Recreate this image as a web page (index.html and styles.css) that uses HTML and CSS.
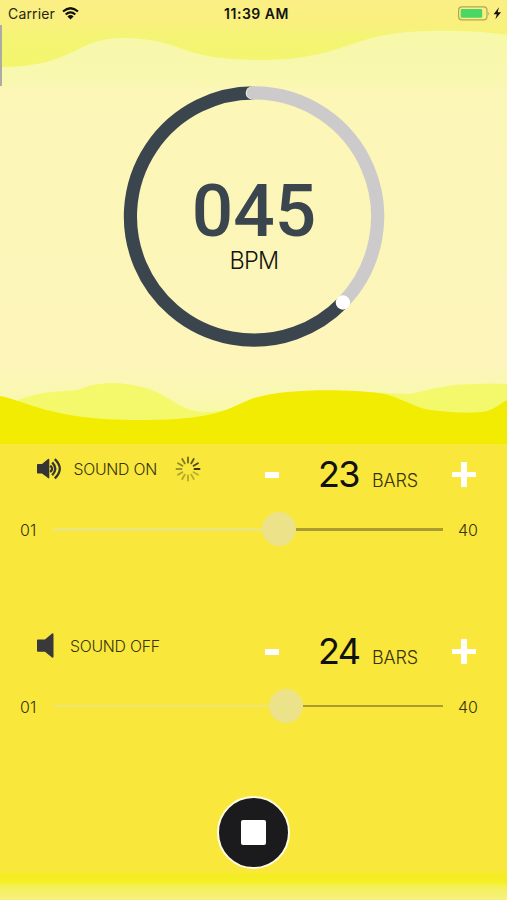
FILE: index.html
```html
<!DOCTYPE html>
<html lang="en">
<head>
<meta charset="utf-8">
<title>Metronome</title>
<link rel="stylesheet" href="styles.css">
</head>
<body>
<main class="app">
  <section class="hero">
    <svg class="waves" viewBox="0 0 507 444" aria-hidden="true">
      <defs>
        <linearGradient id="sky" x1="0" y1="0" x2="0" y2="1">
          <stop offset="0" stop-color="#f7f8a4"/>
          <stop offset=".13" stop-color="#f8f8ad"/>
          <stop offset=".19" stop-color="#f9f7b0"/>
          <stop offset=".2" stop-color="#fcf6b7"/>
          <stop offset=".82" stop-color="#fdf5ba"/>
          <stop offset=".9" stop-color="#f9f8af"/>
          <stop offset="1" stop-color="#f8fa9d"/>
        </linearGradient>
        <linearGradient id="crest" x1="0" y1="0" x2="0" y2="1">
          <stop offset="0" stop-color="#fbef84"/>
          <stop offset=".35" stop-color="#f9f07e"/>
          <stop offset=".5" stop-color="#f5f476"/>
          <stop offset="1" stop-color="#f2f66c"/>
        </linearGradient>
      </defs>
      <rect width="507" height="444" fill="url(#sky)"/>
      <path fill="url(#crest)" d="M0 0H507V35C475 30 420 29 385 35C345 43 326 60 260 60C175 60 184 38 122 38C75 38 75 67 0 67Z"/>
      <path fill="#f4f96b" d="M18 400C45 390 59 392 78 390C90 385 98 383 115 383C165 386 169 405 195 411C230 417 270 392 330 391C365 391 390 394 410 394C445 387 445 383 507 384V444H18Z"/>
      <path fill="#f2ec02" d="M0 396C27 401 50 420 139 420C218 420 226 409 254 398C285 388 350 389 379 393C399 396 412 407 430 410C456 413 479 414 490 410C498 407 502 402 507 400V444H0Z"/>
    </svg>
    <i class="scroll-mark"></i>
    <header class="status">
      <div class="carrier">Carrier
        <svg width="17" height="13" viewBox="0 0 17 13" fill="none" stroke="#111" stroke-width="2.2">
          <path d="M1 4.5Q8.5-2 16 4.5M3.7 7.5Q8.5 3.2 13.3 7.5"/>
          <path d="M5.4 9.4Q8.5 6.8 11.6 9.4L8.5 12.5Z" fill="#111" stroke="none"/>
        </svg>
      </div>
      <time>11:39 AM</time>
      <svg class="battery" width="44" height="15" viewBox="0 0 44 15">
        <rect x=".6" y=".9" width="28.4" height="13" rx="3.4" fill="none" stroke="#b2a558" stroke-width="1.2"/>
        <rect x="2.7" y="3" width="21.5" height="8.8" rx="1.2" fill="#4bd763"/>
        <path d="M30.3 5.4Q32 7.4 30.3 9.4Z" fill="#b2a558"/>
        <path d="M41 1.2L35.6 8.2H38.8L37.4 13.3L43 6.3H39.6Z" fill="#111"/>
      </svg>
    </header>
    <div class="dial">
      <svg class="ring" viewBox="-.3 .5 262 262" fill="none" stroke-width="13.2" aria-hidden="true">
        <path stroke="#3b454e" d="M219.5 217A123.6 123.6 0 1 1 131 7.4"/>
        <path stroke="#f1f0e6" stroke-linecap="round" d="M129 7.4H131"/>
        <path stroke="#cccacb" stroke-linecap="round" d="M130 7.4H131A123.6 123.6 0 0 1 219.5 217"/>
        <circle cx="219.6" cy="217" r="7.2" fill="#fff"/>
      </svg>
      <strong>045</strong>
      <span>BPM</span>
    </div>
  </section>

  <section class="track">
    <div class="top">
      <div class="label on">
        <svg class="speaker" width="26" height="22" viewBox="0 0 26 22" fill="none">
          <path fill="#343434" d="M0 6.8Q0 6 .8 6H5L11 1.1Q12.3.3 12.3 1.8V19.5Q12.3 21 11 20.1L5 15.5H.8Q0 15.5 0 14.7Z"/>
          <path stroke="#343434" stroke-width="2.3" d="M13.2 7.6Q17 10.8 13.2 14M15.2 4.4Q21.3 10.8 15.2 17.2M17.8 1.2Q27.8 10.8 17.8 20.4"/>
        </svg>
        <span>SOUND ON</span>
        <svg class="spinner" width="26" height="26" viewBox="-13 -13 26 26" stroke="#302c13" stroke-width="1.9" stroke-linecap="round">
          <path d="M6.5 0H11.5" opacity=".95"/>
          <path d="M6.5 0H11.5" transform="rotate(-30)" opacity=".86"/>
          <path d="M6.5 0H11.5" transform="rotate(-60)" opacity=".76"/>
          <path d="M6.5 0H11.5" transform="rotate(-90)" opacity=".65"/>
          <path d="M6.5 0H11.5" transform="rotate(-120)" opacity=".58"/>
          <path d="M6.5 0H11.5" transform="rotate(-150)" opacity=".5"/>
          <path d="M6.5 0H11.5" transform="rotate(180)" opacity=".44"/>
          <path d="M6.5 0H11.5" transform="rotate(150)" opacity=".36"/>
          <path d="M6.5 0H11.5" transform="rotate(120)" opacity=".34"/>
          <path d="M6.5 0H11.5" transform="rotate(90)" opacity=".32"/>
          <path d="M6.5 0H11.5" transform="rotate(60)" opacity=".3"/>
          <path d="M6.5 0H11.5" transform="rotate(30)" opacity=".3"/>
        </svg>
      </div>
      <i class="minus"></i>
      <div class="count"><b>23</b><span>BARS</span></div>
      <i class="plus"></i>
    </div>
    <div class="range">
      <span>01</span>
      <div class="slider"><i class="filled" style="width:209px"></i><i class="knob"></i><i class="rest"></i></div>
      <span>40</span>
    </div>
  </section>

  <section class="track second">
    <div class="top">
      <div class="label off">
        <svg class="speaker" width="17" height="26" viewBox="0 0 17 26">
          <path fill="#393939" d="M0 7.6Q0 6.6 1 6.6H8L14.7.8Q16.5-.4 16.5 1.6V23.4Q16.5 25.6 14.7 24.2L8 18.8H1Q0 18.8 0 17.8Z"/>
        </svg>
        <span>SOUND OFF</span>
      </div>
      <i class="minus"></i>
      <div class="count"><b>24</b><span>BARS</span></div>
      <i class="plus"></i>
    </div>
    <div class="range">
      <span>01</span>
      <div class="slider"><i class="filled" style="width:216px"></i><i class="knob"></i><i class="rest"></i></div>
      <span>40</span>
    </div>
  </section>

  <footer><div class="stop"><i></i></div></footer>
</main>
</body>
</html>
```

FILE: styles.css
```css
* { box-sizing: border-box; }
body { margin: 0; font-family: Inter, "Liberation Sans", sans-serif; color: #111; }
i { display: block; }
svg { display: block; flex: none; }
.app {
  width: 507px;
  height: 900px;
  overflow: hidden;
  display: flex;
  flex-direction: column;
  background: #f9e83b;
}
.hero { position: relative; height: 444px; flex: none; }
.waves { position: absolute; inset: 0; width: 507px; height: 444px; }
.scroll-mark { position: absolute; left: 0; top: 25px; width: 2px; height: 61px; background: #adaca2; }
.status {
  position: relative;
  height: 27px;
  padding: 0 5px 0 8px;
  display: grid;
  grid-template-columns: 1fr auto 1fr;
  align-items: center;
  font-size: 14px;
}
.carrier { display: flex; align-items: center; gap: 7px; letter-spacing: .15px; color: #28260f; }
.status time { padding-left: 3px; font-weight: 600; letter-spacing: .5px; }
.battery { justify-self: end; }
.dial {
  position: relative;
  width: 262px;
  height: 262px;
  margin: 59px 0 0 123px;
  display: flex;
  flex-direction: column;
  align-items: center;
}
.ring { position: absolute; inset: 0; width: 262px; height: 262px; }
.dial strong {
  margin-top: 92px;
  font: 500 73px/66px Roboto, sans-serif;
  color: #3b454e;
}
.dial span { margin-top: 4px; font-size: 23.5px; line-height: 26px; font-weight: 300; letter-spacing: -.7px; }

.track { height: 177px; flex: none; color: #38320e; }
.top { height: 62px; display: grid; grid-template-columns: 265px 53px 134px 1fr; align-items: center; }
.label { display: flex; align-items: center; padding-left: 37px; margin-top: -12px; font-size: 15.8px; font-weight: 350; letter-spacing: -.25px; }
.label.on span { margin-left: 10.5px; width: 101.5px; }
.label.off span { margin-left: 16px; }
.minus { width: 14px; height: 6px; margin-top: -1px; background: #fff; }
.plus {
  width: 24px;
  height: 25px;
  margin-top: -1px;
  background:
    linear-gradient(#fff, #fff) center / 24px 5px no-repeat,
    linear-gradient(#fff, #fff) center / 6px 25px no-repeat;
}
.count { display: flex; align-items: baseline; font-weight: 350; margin-top: -2px; }
.count b { width: 54px; font-size: 36px; font-weight: 370; letter-spacing: -1.6px; color: #111; }
.count span { font-size: 18px; letter-spacing: -.2px; }
.range { height: 34px; margin-top: 6px; display: grid; grid-template-columns: 33px 390px 1fr; align-items: center; padding-left: 20px; font-size: 16px; font-weight: 350; }
.range > span { padding-top: 1px; }
.range > span:last-child { padding-left: 15px; }
.slider { display: flex; align-items: center; height: 34px; }
.filled { height: 3px; background: #eee578; }
.knob { width: 34px; height: 34px; border-radius: 50%; background: #ebe28a; }
.rest { flex: 1; height: 3px; background: #aa9c31; }
.second .filled, .second .rest { height: 2px; }
footer {
  flex: 1;
  display: flex;
  justify-content: center;
  background: linear-gradient(#f9e83b 0, #f9e83b 73px, #f5ec22 77px, #f5ef25 84px, #f5f05c 89px, #f6f17e 102px) bottom / 100% 102px no-repeat;
}
.stop {
  width: 73px;
  height: 73px;
  margin-top: -2px;
  border: 2.5px solid #fffce2;
  border-radius: 50%;
  background: #1b1a1c;
  display: grid;
  place-items: center;
}
.stop i { width: 25px; height: 25px; border-radius: 2px; background: #fff; }
```
